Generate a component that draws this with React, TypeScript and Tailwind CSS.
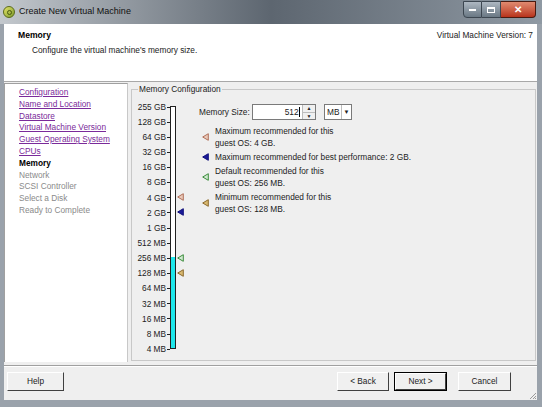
import React from 'react';

const FONT = { fontFamily: '"Liberation Sans", Arial, sans-serif' };

const SCALE = ['255 GB', '128 GB', '64 GB', '32 GB', '16 GB', '8 GB', '4 GB', '2 GB', '1 GB', '512 MB', '256 MB', '128 MB', '64 MB', '32 MB', '16 MB', '8 MB', '4 MB'];

const NAV_DONE = ['Configuration', 'Name and Location', 'Datastore', 'Virtual Machine Version', 'Guest Operating System', 'CPUs'];
const NAV_TODO = ['Network', 'SCSI Controller', 'Select a Disk', 'Ready to Complete'];

function Marker({ fill, stroke }: { fill: string; stroke: string }) {
  return (
    <svg width="7" height="8" viewBox="0 0 7 8" className="block">
      <polygon points="0.7,4 6.3,0.7 6.3,7.3" fill={fill} stroke={stroke} strokeWidth="1" />
    </svg>
  );
}

const MARKERS = {
  max: { fill: '#e9c8b8', stroke: '#b0705a' },
  best: { fill: '#1a1a9a', stroke: '#10107a' },
  def: { fill: '#cfe8cf', stroke: '#3c8c3c' },
  min: { fill: '#d8b870', stroke: '#8c6a2c' },
};

function Button({ label, isDefault = false }: { label: string; isDefault?: boolean }) {
  return (
    <div className={`h-[19px] ${isDefault ? 'border border-black' : ''}`}>
      <div
        className={`h-full flex items-center justify-center bg-[#f0f0f0] border-t border-l border-t-white border-l-white border-b border-r border-b-[#404040] border-r-[#404040] text-[8.3px] text-[#222]`}
      >
        {label}
      </div>
    </div>
  );
}

export default function App() {
  return (
    <div className="w-[542px] h-[407px] flex flex-col bg-[#9aa2ab] overflow-hidden" style={FONT}>
      {/* Title bar */}
      <div className="h-[24px] flex items-center relative bg-gradient-to-r from-[#c3c8cd] via-[#5d6670] to-[#8f99a3]">
        <div className="ml-[3px] w-[12px] h-[12px] rounded-full bg-gradient-to-br from-[#e6e46a] to-[#7a9a2a] border border-[#5a6a1a] flex items-center justify-center">
          <div className="w-[5px] h-[5px] rounded-full border border-[#4a5a10]" />
        </div>
        <span className="ml-[4px] text-[9px] text-[#111]">Create New Virtual Machine</span>
        <div className="ml-auto mr-[6px] mb-[4px] flex h-[17px] self-start mt-[1px]">
          <div className="w-[19px] border border-[#3c4650] rounded-bl-[4px] bg-gradient-to-b from-[#aeb8c2] to-[#6a7884] flex items-center justify-center">
            <div className="w-[7px] h-[2px] bg-white" />
          </div>
          <div className="w-[19px] border-y border-r border-[#3c4650] bg-gradient-to-b from-[#aeb8c2] to-[#6a7884] flex items-center justify-center">
            <div className="w-[8px] h-[6px] border border-white border-t-2" />
          </div>
          <div className="w-[35px] border-y border-r border-[#4a1a10] rounded-br-[4px] bg-gradient-to-b from-[#e08a70] to-[#b8321a] flex items-center justify-center text-white text-[10px] font-bold">
            ✕
          </div>
        </div>
      </div>

      {/* Client area */}
      <div className="mx-[4px] mr-[5px] h-[376px] flex flex-col bg-[#efefef] text-[8.3px] text-[#222]">
        {/* Header */}
        <div className="h-[58px] bg-white border-b border-[#a8a8a8] flex">
          <div className="pl-[14px] pt-[5px]">
            <div className="font-bold text-[8.6px] text-black">Memory</div>
            <div className="pl-[14px] mt-[2px]">Configure the virtual machine's memory size.</div>
          </div>
          <div className="ml-auto pr-[4px] pt-[5px]">Virtual Machine Version: 7</div>
        </div>

        {/* Middle */}
        <div className="h-[283px] flex">
          <div className="mt-[1px] w-[124px] h-[279px] bg-white border-t border-l border-[#a0a0a0] border-r border-r-[#c8c8c8] pl-[14px] pt-[3px] leading-[11.8px]">
            {NAV_DONE.map((n) => (
              <div key={n} className="text-[#7a2a9a] underline">{n}</div>
            ))}
            <div className="font-bold text-black">Memory</div>
            {NAV_TODO.map((n) => (
              <div key={n} className="text-[#8a8a8a]">{n}</div>
            ))}
          </div>

          <fieldset className="ml-[3px] mt-[1px] w-[405px] h-[278px] border border-[#c8c8c8] pl-[1px]">
            <legend className="ml-[5px] px-[1px] text-[8.3px]">Memory Configuration</legend>
            <div className="flex mt-[4px]">
              {/* Scale */}
              <div className="flex">
                <div className="flex flex-col">
                  {SCALE.map((s) => (
                    <div key={s} className="h-[15.15px] flex items-center justify-end">
                      <span className="w-[34px] text-right pr-[1px]">{s}</span>
                      <div className="w-[3px] h-[1px] bg-[#202020]" />
                    </div>
                  ))}
                </div>
                <div className="relative mt-[7px]">
                  <div className="w-[6px] h-[243px] border border-[#202020] bg-white flex flex-col justify-end">
                    <div className="h-[91px] bg-[#1ee6ea]" />
                  </div>
                  <div className="absolute left-[7px] top-[87px]"><Marker {...MARKERS.max} /></div>
                  <div className="absolute left-[7px] top-[102px]"><Marker {...MARKERS.best} /></div>
                  <div className="absolute left-[7px] top-[148px]"><Marker {...MARKERS.def} /></div>
                  <div className="absolute left-[7px] top-[163px]"><Marker {...MARKERS.min} /></div>
                </div>
              </div>

              {/* Right column */}
              <div className="ml-[23px] pt-[5px]">
                <div className="flex items-center h-[16px]">
                  <span className="w-[53px]">Memory Size:</span>
                  <div className="flex h-[16px] border border-[#7a7a7a] bg-white">
                    <div className="w-[49px] flex items-center justify-end pr-[2px]">512<span className="ml-[0.5px] w-[1px] h-[10px] bg-black" /></div>
                    <div className="w-[13px] flex flex-col border-l border-[#bdbdbd] bg-[#f0f0f0]">
                      <div className="flex-1 flex items-center justify-center border-b border-[#bdbdbd] text-[5px] leading-none">▲</div>
                      <div className="flex-1 flex items-center justify-center text-[5px] leading-none">▼</div>
                    </div>
                  </div>
                  <div className="ml-[8px] flex h-[16px] w-[28px] border border-[#7a7a7a] bg-white items-center">
                    <span className="pl-[2px] flex-1">MB</span>
                    <div className="w-[10px] h-full flex items-center justify-center border-l border-[#bdbdbd] text-[6px]">▼</div>
                  </div>
                </div>

                <div className="mt-[5px] ml-[3px] flex flex-col gap-[2px] leading-[12px]">
                  <div className="flex items-center">
                    <div className="w-[13px]"><Marker {...MARKERS.max} /></div>
                    <div>Maximum recommended for this<br />guest OS: 4 GB.</div>
                  </div>
                  <div className="flex items-center">
                    <div className="w-[13px]"><Marker {...MARKERS.best} /></div>
                    <div>Maximum recommended for best performance: 2 GB.</div>
                  </div>
                  <div className="flex items-center">
                    <div className="w-[13px]"><Marker {...MARKERS.def} /></div>
                    <div>Default recommended for this<br />guest OS: 256 MB.</div>
                  </div>
                  <div className="flex items-center">
                    <div className="w-[13px]"><Marker {...MARKERS.min} /></div>
                    <div>Minimum recommended for this<br />guest OS: 128 MB.</div>
                  </div>
                </div>
              </div>
            </div>
          </fieldset>
        </div>

        {/* Separator */}
        <div className="border-t border-[#a0a0a0] border-b border-b-white" />

        {/* Buttons */}
        <div className="flex-1 flex items-start pt-[5px] pl-[3px] pr-[26px] relative">
          <div className="w-[57px]"><Button label="Help" /></div>
          <div className="ml-auto w-[52px]"><Button label="< Back" /></div>
          <div className="ml-[5px] w-[53px]"><Button label="Next >" isDefault /></div>
          <div className="ml-[11px] w-[53px]"><Button label="Cancel" /></div>
          <svg className="absolute right-0 bottom-0" width="8" height="8" viewBox="0 0 8 8">
            <path d="M7 1L1 7M7 4L4 7M7 6L6 7" stroke="#9a9a9a" strokeWidth="1" />
          </svg>
        </div>
      </div>
    </div>
  );
}
